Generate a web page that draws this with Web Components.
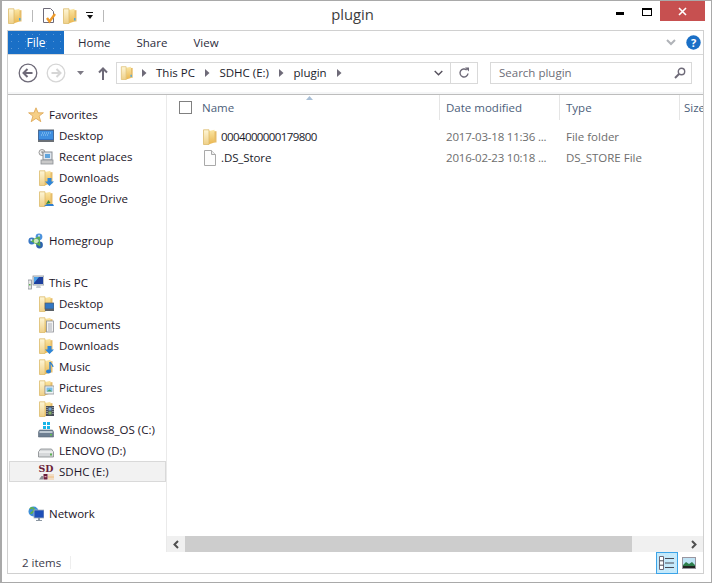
<!DOCTYPE html>
<html>
<head>
<meta charset="utf-8">
<title>plugin</title>
<style>
  html, body { margin: 0; height: 100%; }
  body { background: #fff; font-family: "Open Sans", "Noto Sans", sans-serif; font-size: 12px; }
</style>
</head>
<body>
<explorer-window>
  <title-bar slot="title" text="plugin"></title-bar>
  <ribbon-tabs slot="ribbon"></ribbon-tabs>
  <nav-bar slot="nav"></nav-bar>
  <nav-pane slot="side">
    <nav-item icon="star" top>Favorites</nav-item>
    <nav-item icon="desktop" sub>Desktop</nav-item>
    <nav-item icon="recent" sub>Recent places</nav-item>
    <nav-item icon="fdown" sub>Downloads</nav-item>
    <nav-item icon="fdrive" sub>Google Drive</nav-item>
    <nav-item spacer></nav-item>
    <nav-item icon="home" top>Homegroup</nav-item>
    <nav-item spacer></nav-item>
    <nav-item icon="pc" top>This PC</nav-item>
    <nav-item icon="fdesk" sub>Desktop</nav-item>
    <nav-item icon="fdocs" sub>Documents</nav-item>
    <nav-item icon="fdown" sub>Downloads</nav-item>
    <nav-item icon="fmusic" sub>Music</nav-item>
    <nav-item icon="fpics" sub>Pictures</nav-item>
    <nav-item icon="fvid" sub>Videos</nav-item>
    <nav-item icon="winos" sub>Windows8_OS (C:)</nav-item>
    <nav-item icon="hdd" sub>LENOVO (D:)</nav-item>
    <nav-item icon="sd" sub selected>SDHC (E:)</nav-item>
    <nav-item spacer></nav-item>
    <nav-item icon="net" top>Network</nav-item>
  </nav-pane>
  <file-list slot="main">
    <file-row icon="folder" tight date="2017-03-18 11:36 ..." type="File folder">0004000000179800</file-row>
    <file-row icon="file" date="2016-02-23 10:18 ..." type="DS_STORE File">.DS_Store</file-row>
  </file-list>
  <status-bar slot="status" text="2 items"></status-bar>
</explorer-window>

<script>
// folder body, the overlays sit on top of it
const folder = `
  <defs>
    <linearGradient id="fp" x1="0" y1="0" x2="0" y2="1"><stop offset="0" stop-color="#fef6d6"/><stop offset="1" stop-color="#efd088"/></linearGradient>
    <linearGradient id="fm" x1="0" y1="0" x2="0" y2="1"><stop offset="0" stop-color="#fbe7a5"/><stop offset="1" stop-color="#eab64f"/></linearGradient>
  </defs>
  <path d="M12 2.200h2.500v11.300H12z" fill="#e6bc68"/>
  <path d="M7 2L12.500 .8v12.800L7 15.300z" fill="url(#fm)"/>
  <path d="M1.500 .8h5.500v14.700H1.500z" fill="url(#fp)" stroke="#dcbb6c" stroke-width=".8"/>`

const icons = {
  folder,
  qfolder: folder + `<rect x="12" y="10" width="1.500" height="2.500" fill="#4aa8e0"/>`,
  file: `<path d="M2.500 .5h7l4 4v11h-11z" fill="#fdfdfd" stroke="#a9a9a9"/><path d="M9.500 .5v4h4" fill="#eee" stroke="#a9a9a9"/>`,
  props: `<path d="M2.500 .5h7l3 3v11h-10z" fill="#fff" stroke="#6e6a78"/><path d="M6 10l2.500 3.500L14 6" fill="none" stroke="#ee9a2a" stroke-width="2.400"/>`,
  star: `<path d="M8 .8l2.100 5h5.300l-4.300 3.300 1.700 5.600L8 11.400l-4.800 3.300 1.700-5.600L.6 5.800h5.300z" fill="#f6cf86" stroke="#dca552" stroke-width=".8"/>`,
  desktop: `<rect x="0" y="2" width="16" height="11" fill="#2f6fc2" stroke="#5c6770"/><rect x="1" y="3" width="14" height="8" fill="#3f8fe0"/><path d="M4 5h9M3 7h7" stroke="#9fd0f5" stroke-dasharray="1 1"/><rect x="0" y="12" width="16" height="2" fill="#6b7075"/>`,
  recent: `<circle cx="4" cy="3.500" r="3" fill="#eee" stroke="#999"/><path d="M4 2v2h1.500" stroke="#666" fill="none" stroke-width=".7"/><rect x="5" y="3" width="9" height="8" fill="#dfe6ee" stroke="#8b8f94"/><rect x="7" y="5" width="5" height="4" fill="#5fa4dd"/><rect x="3" y="11" width="12" height="4" fill="#c9c9c9" stroke="#8b8f94" stroke-width=".8"/>`,
  fdown: folder + `<path d="M9.500 8h4v3.500H16L11.500 16 7 11.500h2.500z" fill="#2f86d8"/>`,
  fdrive: folder + `<path d="M6 15l3-2h6l1 2z" fill="#2f7fd0"/><path d="M8 13l2.500-4 2 3z" fill="#2e8b3d"/>`,
  fdesk: folder + `<rect x="7" y="7" width="9" height="6" fill="#3277c4" stroke="#4f5a66" stroke-width=".7"/><rect x="7" y="13" width="9" height="2" fill="#5b6168"/>`,
  fdocs: folder + `<rect x="8.500" y="4" width="7" height="11" fill="#f2f2f2" stroke="#8d9096" stroke-width=".8"/><path d="M10 7h4M10 9h4M10 11h4M10 13h4" stroke="#9aa0a8" stroke-width=".8"/>`,
  fmusic: folder + `<path d="M12 3v9" stroke="#2a7fd2" stroke-width="1.400"/><path d="M12 3c1 2 3 2.500 3 5" fill="none" stroke="#2a7fd2" stroke-width="1.200"/><ellipse cx="10.500" cy="12.500" rx="2.500" ry="2" fill="#2a7fd2"/>`,
  fpics: folder + `<rect x="7" y="6" width="9" height="8" fill="#f1f4f6" stroke="#8d9096" stroke-width=".8"/><rect x="8.500" y="7.500" width="6" height="4" fill="#7bbde6"/><path d="M8.500 11.500l3-2 3 2z" fill="#4b9c62"/>`,
  fvid: folder + `<rect x="8" y="5" width="8" height="10" fill="#474c57"/><path d="M9 6v8M15 6v8" stroke="#c9ccd2" stroke-dasharray="1 1"/><rect x="10.500" y="6.500" width="3" height="3" fill="#6fa3d6"/><rect x="10.500" y="10.500" width="3" height="3" fill="#83b06a"/>`,
  home: `<circle cx="3.800" cy="8" r="3.400" fill="#3a78c6"/><circle cx="11" cy="3.800" r="3.400" fill="#4d93dd"/><circle cx="11.500" cy="12" r="3.400" fill="#2c62ad"/><path d="M4 8l7-4 .5 8z" fill="none" stroke="#5fb04c" stroke-width="1.600"/><circle cx="8" cy="8" r="2.200" fill="#cfe8bd"/><circle cx="3.300" cy="7" r="1" fill="#cfe4fa"/><circle cx="11" cy="2.800" r="1" fill="#cfe4fa"/>`,
  pc: `<rect x="0" y="5" width="3.500" height="9" fill="#e6e6e6" stroke="#8a9197" stroke-width=".8"/><rect x="1" y="9" width="1.500" height="1.500" fill="#58b04f"/><rect x="5" y="1" width="11" height="9" fill="#e3e8ed" stroke="#8a9197" stroke-width=".8"/><rect x="6" y="2" width="9" height="7" fill="#1d3f9e"/><path d="M6 2h5L6 8z" fill="#4aa0e8"/><path d="M9 10h3l1 3H8z" fill="#c6ccd2"/>`,
  winos: `<path d="M5 0h3v3H5zM9 0h3v3H9zM5 4h3v3H5zM9 4h3v3H9z" fill="#17b5e8"/><path d="M.5 10l1-2h13l1 2v5H.5z" fill="#6e7f92" stroke="#566372" stroke-width=".6"/><rect x="1.500" y="9" width="13" height="2" fill="#bcc7d1"/><rect x="12" y="12" width="2" height="1.500" fill="#60c050"/>`,
  hdd: `<path d="M.5 9l2-3h11l2 3v5H.5z" fill="#d6d8da" stroke="#84888c" stroke-width=".8"/><path d="M1 9h14" stroke="#fff"/><rect x="12" y="10.500" width="2" height="2" fill="#58b04f"/>`,
  sd: `<text x="8" y="8" text-anchor="middle" font-family="DejaVu Serif" font-weight="700" font-size="8.500" fill="#6b1f3a" textLength="15" lengthAdjust="spacingAndGlyphs">SD</text>
    <path d="M1 15.500l2.500-3.500h1.500v3.500z" fill="#8b8f94"/><path d="M5.500 10h4v5.500h-4z" fill="#6b1f3a"/><path d="M6.500 12.700h2" stroke="#f2c9d4"/>
    <path d="M11 10.500v5M13 10.500v5M15 10.500v5M10.500 13h5.500" stroke="#ef9f3c" stroke-dasharray="1 1"/>`,
  net: `<circle cx="5.500" cy="5.500" r="5" fill="#3f8fd8"/><path d="M2 3c2-2 4-1 4 1S3 6 3 8M7 7c2 0 2 2 1 3" fill="none" stroke="#5fb04c" stroke-width="1.800"/><rect x="6" y="4" width="10" height="8" fill="#1e4fb8" stroke="#a9b3bd" stroke-width=".8"/><path d="M10 12h2v2h2v1H8v-1h2z" fill="#8d98a3"/>`,
}

const svg = (name, size = 16) =>
  `<svg width="${size}" height="${size}" viewBox="0 0 16 16" aria-hidden="true">${icons[name]}</svg>`

const dots = 'radial-gradient(rgba(255,255,255,.28) .6px, transparent .7px)'

class ExplorerWindow extends HTMLElement {
  constructor() {
    super()
    this.attachShadow({ mode: 'open' }).innerHTML = `
    <style>
      :host { display: flex; flex-direction: column; box-sizing: border-box; height: 583px; border: 1px solid #a9a9a9; border-width: 1px 1px 1px 2px; padding: 0 7px 8px 5px; background: #fff; color: #1b1b2b; }
      .frame { flex: 1; min-height: 0; display: flex; flex-direction: column; border: 1px solid #d0d0d0; }
      .band { height: 2px; flex: none; background: #f5f6f7; }
      .rule { height: 1px; flex: none; background: #bdbdbd; }
      .body { flex: 1; min-height: 0; display: flex; }
      .main { flex: 1; min-width: 0; display: flex; flex-direction: column; }
    </style>
    <slot name="title"></slot>
    <div class="frame">
      <slot name="ribbon"></slot>
      <slot name="nav"></slot>
      <div class="band"></div>
      <div class="rule"></div>
      <div class="body">
        <slot name="side"></slot>
        <div class="main"><slot name="main"></slot></div>
      </div>
      <slot name="status"></slot>
    </div>`
  }
}

class TitleBar extends HTMLElement {
  constructor() {
    super()
    this.attachShadow({ mode: 'open' })
  }
  connectedCallback() {
    this.shadowRoot.innerHTML = `
    <style>
      :host { display: flex; align-items: flex-start; height: 29px; position: relative; }
      .qat { display: flex; align-items: center; height: 29px; padding-left: 0; }
      .qat svg { display: block; }
      .sep { width: 1px; height: 12px; background: #b9b9b9; }
      .drop { width: 7px; margin: 0 10px 0 0; }
      .drop i { display: block; height: 1px; margin-bottom: 2px; background: #111; }
      .drop b { display: block; width: 0; margin: 0 auto; border: 3px solid transparent; border-top: 4px solid #111; border-bottom: 0; }
      .name { position: absolute; left: 0; right: 0; top: 3px; text-align: center; font-size: 14.8px; line-height: 20px; color: #3d3d3d; padding-right: 6px; }
      .ctl { margin-left: auto; display: flex; align-items: flex-start; margin-right: -1px; }
      .min { width: 8px; height: 3px; background: #000; margin: 11px 18px 0 0; }
      .max { box-sizing: border-box; width: 10px; height: 8px; border: 1px solid #000; border-top-width: 2px; margin: 7px 8px 0 0; }
      .close { width: 45px; height: 20px; background: #c75050; display: flex; align-items: center; justify-content: center; }
    </style>
    <div class="qat">
      ${svg('qfolder', 16)}
      <span class="sep" style="margin:0 8px 0 9px"></span>
      ${svg('props', 16)}
      <span style="width:5px"></span>
      ${svg('qfolder', 16)}
      <span style="width:8px"></span>
      <span class="drop"><i></i><b></b></span>
      <span class="sep"></span>
    </div>
    <div class="name">${this.getAttribute('text')}</div>
    <div class="ctl">
      <div class="min"></div>
      <div class="max"></div>
      <div class="close"><svg width="9" height="9" viewBox="0 0 9 9"><path d="M1 1l7 7M8 1L1 8" stroke="#fff" stroke-width="1.600"/></svg></div>
    </div>`
  }
}

class RibbonTabs extends HTMLElement {
  constructor() {
    super()
    this.attachShadow({ mode: 'open' }).innerHTML = `
    <style>
      :host { display: flex; align-items: stretch; height: 23px; border-bottom: 1px solid #d9d9d9; }
      .file { width: 56px; background: ${dots} 0 0 / 7px 7px, #1a6fc6; color: #fff; display: flex; align-items: center; justify-content: center; }
      .tab { display: flex; align-items: center; color: #2c2c3c; font-size: 11.5px; }
      .right { margin-left: auto; display: flex; align-items: center; padding-right: 2px; }
    </style>
    <div class="file">File</div>
    <div class="tab" style="margin-left:14px">Home</div>
    <div class="tab" style="margin-left:26px">Share</div>
    <div class="tab" style="margin-left:26px">View</div>
    <div class="right">
      <svg width="10" height="7" viewBox="0 0 10 7" style="margin-right:10px"><path d="M1 1l4 4 4-4" fill="none" stroke="#b0b3b8" stroke-width="2"/></svg>
      <svg width="15" height="15" viewBox="0 0 15 15"><circle cx="7.500" cy="7.500" r="7.200" fill="#1a6fc6"/><text x="7.500" y="11.600" text-anchor="middle" font-family="Open Sans" font-weight="700" font-size="11" fill="#fff">?</text></svg>
    </div>`
  }
}

class NavBar extends HTMLElement {
  constructor() {
    super()
    const sep = `<svg class="sep" width="5" height="8" viewBox="0 0 5 8"><path d="M0 0l4.500 4L0 8z" fill="#6e6a78"/></svg>`
    this.attachShadow({ mode: 'open' }).innerHTML = `
    <style>
      :host { display: flex; align-items: center; box-sizing: border-box; height: 37px; padding: 0 10px 1px 10px; }
      svg { display: block; flex: none; }
      .box { box-sizing: border-box; height: 22px; border: 1px solid #d9d9d9; display: flex; align-items: center; }
      .box span { position: relative; top: -1px; }
      .addr { width: 362px; margin-left: 8px; padding-left: 3px; color: #1b1b2b; font-size: 11.5px; }
      .addr .sep { margin: 0 9.5px 0 10px; }
      .addr .end { margin-left: auto; display: flex; align-items: center; top: 0; }
      .div { width: 1px; height: 20px; background: #d9d9d9; margin: 0 7px; }
      .search { width: 202px; margin-left: 12px; padding: 0 5px 0 8px; justify-content: space-between; color: #6d6d77; font-size: 11.5px; }
    </style>
    <svg width="20" height="20" viewBox="0 0 20 20"><circle cx="10" cy="10" r="8.800" fill="#fff" stroke="#6e6a78" stroke-width="1.300"/><path d="M14.500 10H6M9.500 6l-4 4 4 4" fill="none" stroke="#6e6a78" stroke-width="2"/></svg>
    <svg width="20" height="20" viewBox="0 0 20 20" style="margin-left:8px"><circle cx="10" cy="10" r="8.800" fill="#fff" stroke="#d6d6d6" stroke-width="1.300"/><path d="M5.500 10H14M10.500 6l4 4-4 4" fill="none" stroke="#d6d6d6" stroke-width="2"/></svg>
    <svg width="7" height="4" viewBox="0 0 7 4" style="margin-left:11px"><path d="M0 0h7L3.500 4z" fill="#7d7a85"/></svg>
    <svg width="10" height="13" viewBox="0 0 10 13" style="margin-left:14px"><path d="M5 13V2M1 5.500L5 1.500l4 4" fill="none" stroke="#6e6a78" stroke-width="2"/></svg>
    <div class="box addr">
      ${svg('qfolder', 14)}
      ${sep.replace('class="sep"', 'class="sep" style="margin:0 9px 0 8px"')}<span>This PC</span>${sep}<span>SDHC (E:)</span>${sep}<span>plugin</span>${sep}
      <span class="end">
        <svg width="9" height="6" viewBox="0 0 9 6"><path d="M.7 1l3.800 3.800L8.300 1" fill="none" stroke="#55505c" stroke-width="1.400"/></svg>
        <span class="div" style="top:0"></span>
        <svg width="12" height="12" viewBox="0 0 12 12" style="margin-right:7px"><path d="M10 6.500A4 4 0 1 1 8.700 3" fill="none" stroke="#6e6a78" stroke-width="1.400"/><path d="M7 .5h4v4z" fill="#6e6a78"/></svg>
      </span>
    </div>
    <div class="box search">
      <span>Search plugin</span>
      <svg width="12" height="12" viewBox="0 0 12 12"><circle cx="7.500" cy="4.500" r="3.200" fill="none" stroke="#6e6a78" stroke-width="1.400"/><path d="M5 7l-4 4" stroke="#6e6a78" stroke-width="2"/></svg>
    </div>`
  }
}

class NavPane extends HTMLElement {
  constructor() {
    super()
    this.attachShadow({ mode: 'open' }).innerHTML = `
    <style>
      :host { display: block; box-sizing: border-box; width: 159px; flex: none; border-right: 1px solid #eaeaea; padding-top: 9px; }
    </style>
    <slot></slot>`
  }
}

class NavItem extends HTMLElement {
  constructor() {
    super()
    this.attachShadow({ mode: 'open' })
  }
  connectedCallback() {
    const indent = this.hasAttribute('sub') ? 30 : 20
    const icon = this.getAttribute('icon')
    this.shadowRoot.innerHTML = `
    <style>
      :host { display: flex; align-items: center; box-sizing: border-box; height: 21px; padding-left: ${indent}px; gap: 5px; font-size: 11.5px; color: #1b1428; white-space: nowrap; }
      :host([selected]) { border: 1px solid #d9d9d9; background: #f2f2f2; margin-left: 1px; padding-left: ${indent - 2}px; width: 157px; }
      svg { display: block; flex: none; }
    </style>
    ${icon ? svg(icon, 16) : ''}<slot></slot>`
  }
}

class FileList extends HTMLElement {
  constructor() {
    super()
    this.attachShadow({ mode: 'open' }).innerHTML = `
    <style>
      :host { flex: 1; min-height: 0; height: 100%; display: flex; flex-direction: column; color: #1b1b2b; }
      .head { display: flex; height: 25px; flex: none; overflow: hidden; position: relative; font-size: 11.5px; color: #4c607a; }
      .col { box-sizing: border-box; padding-left: 6px; border-right: 1px solid #e5e5e5; display: flex; align-items: center; flex: none; }
      .check { box-sizing: border-box; width: 13px; height: 13px; border: 1px solid #808080; margin: 6px 10px 0 12px; flex: none; }
      .name { width: 238px; padding-left: 0; }
      .sort { position: absolute; left: 139px; top: 1px; }
      .rows { flex: 1; padding-top: 6px; }
      .bar { display: flex; height: 16px; flex: none; background: #f0f0f0; }
      .btn { width: 18px; display: flex; align-items: center; justify-content: center; flex: none; }
      .thumb { width: 447px; background: #cdcdcd; flex: none; }
      .track { flex: 1; display: flex; justify-content: flex-end; background: ${dots} 0 0 / 6px 6px; }
    </style>
    <div class="head">
      <span class="check"></span>
      <div class="col name">Name</div>
      <div class="col" style="width:120px">Date modified</div>
      <div class="col" style="width:120px">Type</div>
      <div class="col" style="width:40px;border:0;padding-left:4px">Size</div>
      <svg class="sort" width="7" height="4" viewBox="0 0 7 4"><path d="M0 4l3.500-4L7 4z" fill="#a9bfd6"/></svg>
    </div>
    <div class="rows"><slot></slot></div>
    <div class="bar">
      <div class="btn"><svg width="6" height="9" viewBox="0 0 6 9"><path d="M5 1L1.500 4.500 5 8" fill="none" stroke="#505050" stroke-width="2"/></svg></div>
      <div class="thumb"></div>
      <div class="track"><div class="btn"><svg width="6" height="9" viewBox="0 0 6 9"><path d="M1 1l3.500 3.500L1 8" fill="none" stroke="#505050" stroke-width="2"/></svg></div></div>
    </div>`
  }
}

class FileRow extends HTMLElement {
  constructor() {
    super()
    this.attachShadow({ mode: 'open' })
  }
  connectedCallback() {
    this.shadowRoot.innerHTML = `
    <style>
      :host { display: flex; align-items: center; height: 21px; font-size: 11.5px; white-space: nowrap; }
      :host([tight]) .n { letter-spacing: -.6px; }
      svg { display: block; flex: none; margin-left: 35px; }
      .n { width: 225px; margin-left: 3px; flex: none; letter-spacing: -.1px; }
      .d { width: 120px; flex: none; color: #6d6d6d; letter-spacing: -.2px; }
      .t { color: #6d6d6d; }
    </style>
    ${svg(this.getAttribute('icon'), 16)}
    <span class="n"><slot></slot></span>
    <span class="d">${this.getAttribute('date')}</span>
    <span class="t">${this.getAttribute('type')}</span>`
  }
}

class StatusBar extends HTMLElement {
  constructor() {
    super()
    this.attachShadow({ mode: 'open' })
  }
  connectedCallback() {
    this.shadowRoot.innerHTML = `
    <style>
      :host { display: flex; align-items: center; height: 21px; padding-left: 14px; font-size: 11.5px; color: #3c3c4c; }
      .sep { width: 1px; height: 13px; background: #eee; margin-left: 9px; }
      .views { margin-left: auto; display: flex; align-items: center; padding-right: 7px; }
      .on { box-sizing: border-box; width: 22px; height: 22px; margin-top: 1px; border: 1px solid #3ca4e8; background: ${dots} 0 0 / 5px 5px, #c4e9fb; display: flex; align-items: center; justify-content: center; margin-right: 4px; }
      .off { box-sizing: border-box; width: 14px; height: 12px; border: 1px solid #9a96a0; background: #fff; display: flex; }
    </style>
    <span>${this.getAttribute('text')}</span><span class="sep"></span>
    <div class="views">
      <div class="on"><svg width="16" height="14" viewBox="0 0 16 14"><path d="M.5.5h4v13h-4z" fill="#fff" stroke="#6e6a78"/><path d="M.5 4.800h4M.5 9.200h4M6 2.500h9M6 7h9M6 11.500h9" stroke="#4a4a55"/></svg></div>
      <div class="off"><svg width="12" height="10" viewBox="0 0 12 10" style="display:block"><rect width="12" height="10" fill="#bfe3f5"/><path d="M0 10V7l3-3 3 2 3-2 3 3v3z" fill="#2d7d4b"/><rect x="0" y="8" width="12" height="2" fill="#222"/></svg></div>
    </div>`
  }
}

customElements.define('explorer-window', ExplorerWindow)
customElements.define('title-bar', TitleBar)
customElements.define('ribbon-tabs', RibbonTabs)
customElements.define('nav-bar', NavBar)
customElements.define('nav-pane', NavPane)
customElements.define('nav-item', NavItem)
customElements.define('file-list', FileList)
customElements.define('file-row', FileRow)
customElements.define('status-bar', StatusBar)
</script>
</body>
</html>
